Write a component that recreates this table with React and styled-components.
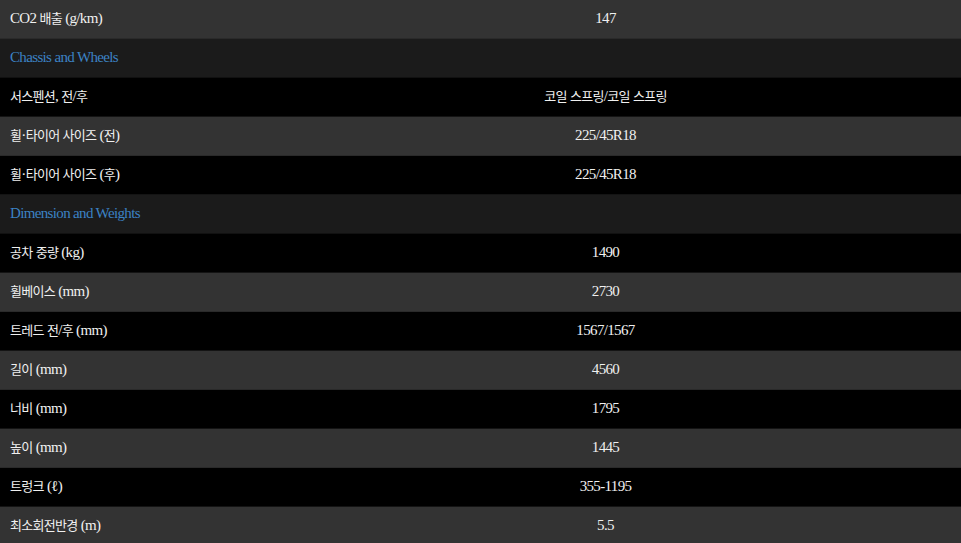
import React from 'react';
import styled, { createGlobalStyle } from 'styled-components';

const GlobalStyle = createGlobalStyle`
    html, body {
        margin: 0;
        padding: 0;
        background-color: #000;
        overflow: hidden;
    }
`;

const Table = styled.div`
    display: flex;
    flex-direction: column;
    width: 961px;
    font-family: "Liberation Serif", "Noto Sans CJK KR", serif;
    font-size: 15px;
    line-height: 20px;
    letter-spacing: -0.65px;
    color: #f0f0f0
`;

const Row = styled.div`
    display: grid;
    grid-template-columns: 250px 1fr;
    align-items: center;
    height: 38px;
    box-sizing: border-box;
    padding-bottom: 2px;
    border-bottom: 1px solid ${props => props.tone === 'grey' ? '#2a2a2a' : '#141414'};
    background-color: ${props => props.tone === 'grey' ? '#333333' : '#000000'};
    height: 39px
`;

const Label = styled.div`
    padding-left: 10px;
    white-space: nowrap
`;

const Value = styled.div`
    text-align: center;
    white-space: nowrap
`;

const Hangul = styled.span`
    font-family: "Noto Sans CJK KR", sans-serif;
    font-size: 13px;
    letter-spacing: -0.7px
`;

const SectionRow = styled.div`
    display: flex;
    align-items: center;
    box-sizing: border-box;
    height: 39px;
    padding: 0 0 2px 10px;
    border-bottom: 1px solid #111;
    background-color: #1b1b1b;
    color: #3b82c4
`;

// korean runs render a bit smaller than the latin serif text
const Mixed = ({ text }) => (
    <>
        {text.split(/([\uAC00-\uD7A3]+)/).map((part, i) =>
            /[\uAC00-\uD7A3]/.test(part) ? <Hangul key={i}>{part}</Hangul> : part
        )}
    </>
);

const sections = [
    { rows: [['CO2 배출 (g/km)', '147']] },
    {
        title: 'Chassis and Wheels',
        rows: [
            ['서스펜션, 전/후', '코일 스프링/코일 스프링'],
            ['휠·타이어 사이즈 (전)', '225/45R18'],
            ['휠·타이어 사이즈 (후)', '225/45R18'],
        ],
    },
    {
        title: 'Dimension and Weights',
        rows: [
            ['공차 중량 (kg)', '1490'],
            ['휠베이스 (mm)', '2730'],
            ['트레드 전/후 (mm)', '1567/1567'],
            ['길이 (mm)', '4560'],
            ['너비 (mm)', '1795'],
            ['높이 (mm)', '1445'],
            ['트렁크 (ℓ)', '355-1195'],
            ['최소회전반경 (m)', '5.5'],
        ],
    },
];

const App = () => {
    return (
        <>
            <GlobalStyle />
            <Table>
                {sections.map((section, i) => (
                    <React.Fragment key={i}>
                        {section.title ? <SectionRow>{section.title}</SectionRow> : null}
                        {section.rows.map(([label, value], j) => (
                            // first block starts grey, sections after a title start black
                            <Row key={j} tone={(section.title ? j % 2 === 1 : j % 2 === 0) ? 'grey' : 'black'}>
                                <Label><Mixed text={label} /></Label>
                                <Value><Mixed text={value} /></Value>
                            </Row>
                        ))}
                    </React.Fragment>
                ))}
            </Table>
        </>
    );
};

export default App;
